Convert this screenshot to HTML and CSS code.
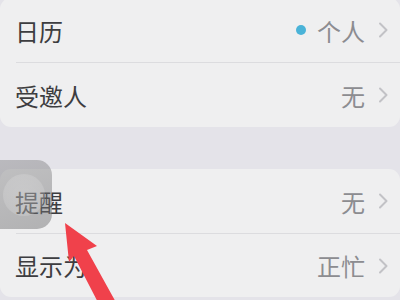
FILE: index.html
```html
<!DOCTYPE html>
<html lang="zh">
<head>
<meta charset="utf-8">
<link rel="stylesheet" href="styles.css">
</head>
<body>
<div class="page">
  <div class="card card-top">
    <div class="row">
      <span class="label">日历</span>
      <span class="value"><span class="dot"></span>个人</span>
      <svg class="chev" viewBox="0 0 10 16" width="10" height="16"><path d="M2 1.5 L8.5 8 L2 14.5" fill="none" stroke="#c2c2c6" stroke-width="2" stroke-linecap="round" stroke-linejoin="round"/></svg>
    </div>
    <div class="row">
      <span class="label">受邀人</span>
      <span class="value">无</span>
      <svg class="chev" viewBox="0 0 10 16" width="10" height="16"><path d="M2 1.5 L8.5 8 L2 14.5" fill="none" stroke="#c2c2c6" stroke-width="2" stroke-linecap="round" stroke-linejoin="round"/></svg>
    </div>
  </div>
  <div class="card card-bottom">
    <div class="row">
      <span class="label">提醒</span>
      <span class="value">无</span>
      <svg class="chev" viewBox="0 0 10 16" width="10" height="16"><path d="M2 1.5 L8.5 8 L2 14.5" fill="none" stroke="#c2c2c6" stroke-width="2" stroke-linecap="round" stroke-linejoin="round"/></svg>
    </div>
    <div class="row">
      <span class="label">显示为</span>
      <span class="value">正忙</span>
      <svg class="chev" viewBox="0 0 10 16" width="10" height="16"><path d="M2 1.5 L8.5 8 L2 14.5" fill="none" stroke="#c2c2c6" stroke-width="2" stroke-linecap="round" stroke-linejoin="round"/></svg>
    </div>
  </div>
  <div class="assist"><div class="assist-ring"></div></div>
  <svg class="arrow" viewBox="0 0 400 300" width="400" height="300">
    <polygon points="65,223 97,246 87,250 118,306 104,314 74,256 69,262" fill="#f0414b"/>
  </svg>
</div>
</body>
</html>
```
FILE: styles.css
```css
html, body {
  margin: 0;
  padding: 0;
}
body {
  width: 400px;
  height: 300px;
  overflow: hidden;
  background: #e4e3e9;
  font-family: "Noto Sans CJK SC", "Noto Sans", sans-serif;
}
.page {
  position: relative;
  width: 400px;
  height: 300px;
  overflow: hidden;
}
.card {
  background: #efeff0;
  border-radius: 11px;
}
.card-top {
  margin-top: -2px;
}
.card-bottom {
  margin-top: 42px;
}
.row {
  position: relative;
  display: flex;
  align-items: center;
  height: 64px;
  padding: 0 12px 0 15px;
}
.row + .row {
  border-top: 1px solid transparent;
}
.row + .row::before {
  content: "";
  position: absolute;
  left: 16px;
  right: 0;
  top: -1px;
  height: 1px;
  background: #dcdcdf;
}
.card-bottom .row:last-child {
  height: 63px;
}
.label {
  flex: 1;
  font-size: 24px;
  color: #3d3d40;
}
.value {
  display: flex;
  align-items: center;
  font-size: 24px;
  color: #8c8c90;
}
.dot {
  width: 10px;
  height: 10px;
  border-radius: 50%;
  background: #4ab3d8;
  margin-right: 11px;
}
.chev {
  margin-left: 13px;
  display: block;
}
.assist {
  position: absolute;
  left: -16px;
  top: 160px;
  width: 68px;
  height: 69px;
  border-radius: 15px;
  background: linear-gradient(160deg, rgba(120,120,122,0.38) 0%, rgba(110,110,112,0.48) 100%);
}
.assist-ring {
  position: absolute;
  left: 19px;
  top: 14px;
  width: 42px;
  height: 42px;
  border-radius: 50%;
  background: radial-gradient(circle, rgba(255,255,255,0.22) 0%, rgba(255,255,255,0.16) 65%, rgba(255,255,255,0.08) 100%);
}
.arrow {
  position: absolute;
  left: 0;
  top: 0;
}
```
